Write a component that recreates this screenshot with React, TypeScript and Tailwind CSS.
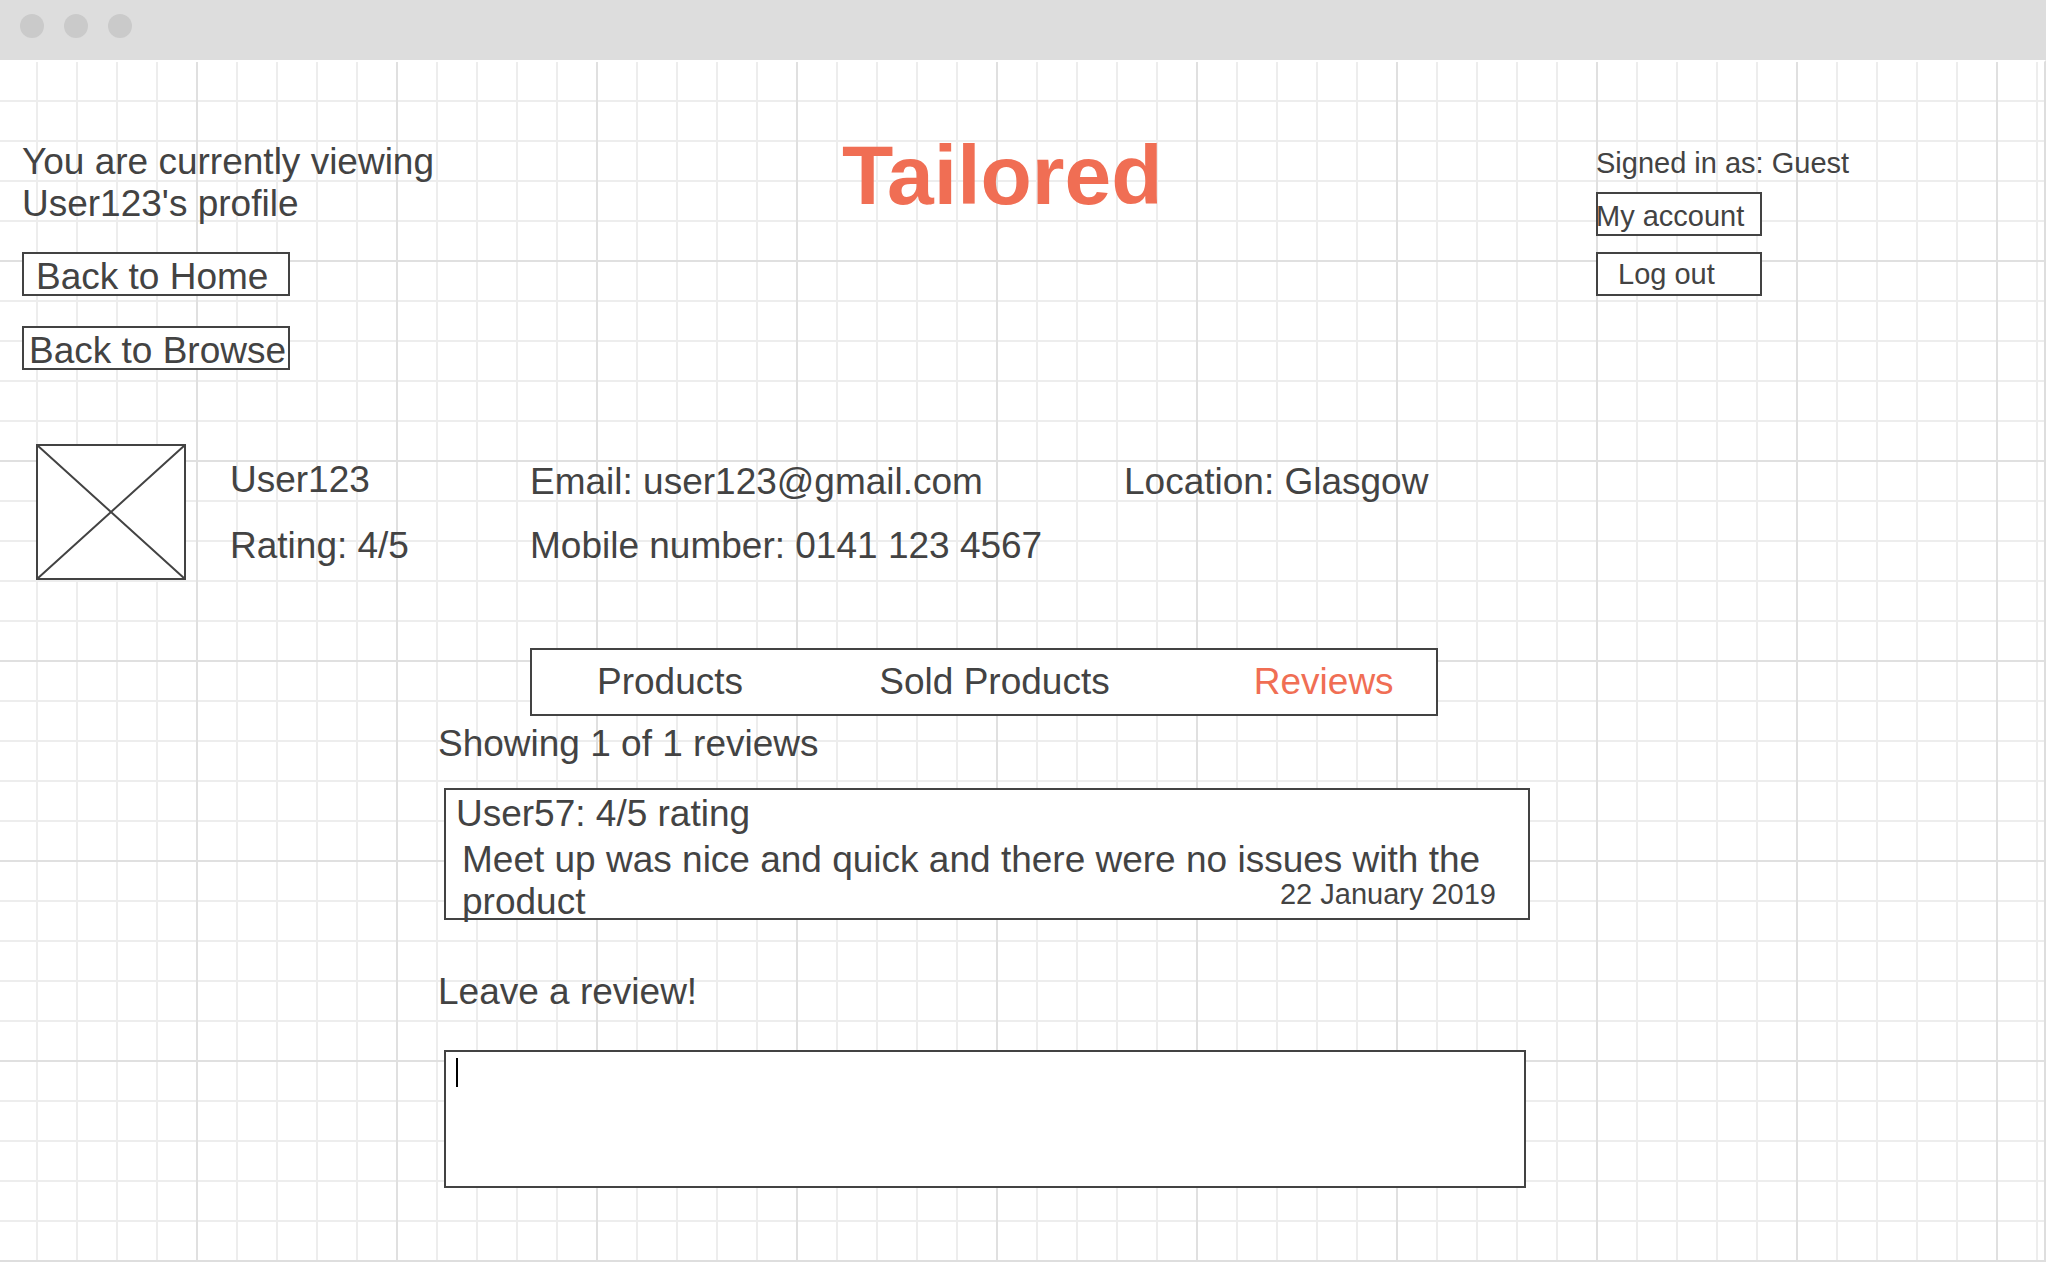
import React from "react";

const box = "border-2 border-[#434343] bg-white";

function WindowBar() {
  return (
    <div className="flex h-[60px] shrink-0 items-start gap-5 bg-[#dddddd] px-5 pt-3.5">
      <span className="size-6 rounded-full bg-[#cacaca]" />
      <span className="size-6 rounded-full bg-[#cacaca]" />
      <span className="size-6 rounded-full bg-[#cacaca]" />
    </div>
  );
}

function Header() {
  return (
    <header className="grid grid-cols-[842fr_754fr_448fr]">
      <div className="flex flex-col items-start pl-[22px] pt-[79px]">
        <p>
          You are currently viewing
          <br />
          User123's profile
        </p>
        <button type="button" className={`${box} mt-[27px] h-11 w-[268px] pt-0.5 pl-3 text-left whitespace-nowrap`}>
          Back to Home
        </button>
        <button type="button" className={`${box} mt-[30px] h-11 w-[268px] pt-0.5 pl-[5px] text-left whitespace-nowrap`}>
          Back to Browse
        </button>
      </div>
      <h1 className="pt-[65px] text-[84px] leading-[96px] font-bold text-[#f06e54]">Tailored</h1>
      <div className="flex flex-col items-start pt-[85px] text-[29px] leading-8">
        <p>Signed in as: Guest</p>
        <button type="button" className={`${box} mt-[13px] h-11 w-[166px] pt-1 -indent-0.5 text-left whitespace-nowrap`}>
          My account
        </button>
        <button type="button" className={`${box} mt-4 h-11 w-[166px] pl-5 text-left`}>
          Log out
        </button>
      </div>
    </header>
  );
}

function Profile() {
  return (
    <section className="mt-[74px] grid grid-cols-[194fr_300fr_594fr_920fr] pl-9">
      <svg
        role="img"
        aria-label="Profile picture"
        width="150"
        height="136"
        viewBox="0 0 150 136"
        fill="none"
        stroke="#434343"
        strokeWidth="2"
      >
        <rect x="1" y="1" width="148" height="134" fill="white" />
        <path d="M1 1L149 135M149 1L1 135" />
      </svg>
      <div className="flex flex-col gap-6 pt-[15px]">
        <p>User123</p>
        <p>Rating: 4/5</p>
      </div>
      <div className="flex flex-col gap-[22px] pt-[17px]">
        <p>Email: user123@gmail.com</p>
        <p>Mobile number: 0141 123 4567</p>
      </div>
      <p className="pt-[17px]">Location: Glasgow</p>
    </section>
  );
}

function Reviews() {
  return (
    <section className="mt-[68px] grid grid-cols-[438fr_1092fr_514fr]">
      <div className="col-start-2 flex flex-col">
        <nav className={`${box} mx-[92px] grid h-[68px] grid-cols-[282fr_374fr_182fr] items-center pl-[65px]`}>
          <a href="#products">Products</a>
          <a href="#sold">Sold Products</a>
          <a href="#reviews" aria-current="page" className="text-[#f06e54]">
            Reviews
          </a>
        </nav>
        <p className="mt-[7px]">Showing 1 of 1 reviews</p>
        <article className={`${box} relative mt-[23px] ml-1.5 pt-[3px] pl-2.5`}>
          <h2>User57: 4/5 rating</h2>
          <p className="mt-1 -mb-[5px] pl-1.5">
            Meet up was nice and quick and there were no issues with the product
          </p>
          <time dateTime="2019-01-22" className="absolute right-8 bottom-2 text-[29px] leading-8">
            22 January 2019
          </time>
        </article>
        <label htmlFor="review" className="mt-[51px]">
          Leave a review!
        </label>
        <div className="relative mt-[37px] mr-1 ml-1.5">
          <textarea
            id="review"
            className={`${box} block h-[138px] w-full resize-none px-2.5 pt-0.5 caret-transparent outline-none`}
          />
          <span className="pointer-events-none absolute top-2 left-3 h-[29px] w-0.5 bg-black" />
        </div>
      </div>
    </section>
  );
}

export default function App() {
  return (
    <div className="flex min-h-screen flex-col bg-white font-['Liberation_Sans',Arial,sans-serif] text-[37px] leading-[42px] text-[#434343]">
      <WindowBar />
      <main className="flex-1 border-t-2 border-r-2 border-b-2 border-t-white border-r-[#dedede] border-b-[#dedede] bg-clip-padding bg-[linear-gradient(to_right,#e0e0e0_2px,transparent_2px),linear-gradient(to_bottom,#e0e0e0_2px,transparent_2px),linear-gradient(to_right,#ededed_2px,transparent_2px),linear-gradient(to_bottom,#ededed_2px,transparent_2px)] bg-size-[200px_200px,200px_200px,40px_40px,40px_40px] bg-position-[-4px_-2px,-4px_-2px,-4px_-2px,-4px_-2px]">
        <Header />
        <Profile />
        <Reviews />
      </main>
    </div>
  );
}
